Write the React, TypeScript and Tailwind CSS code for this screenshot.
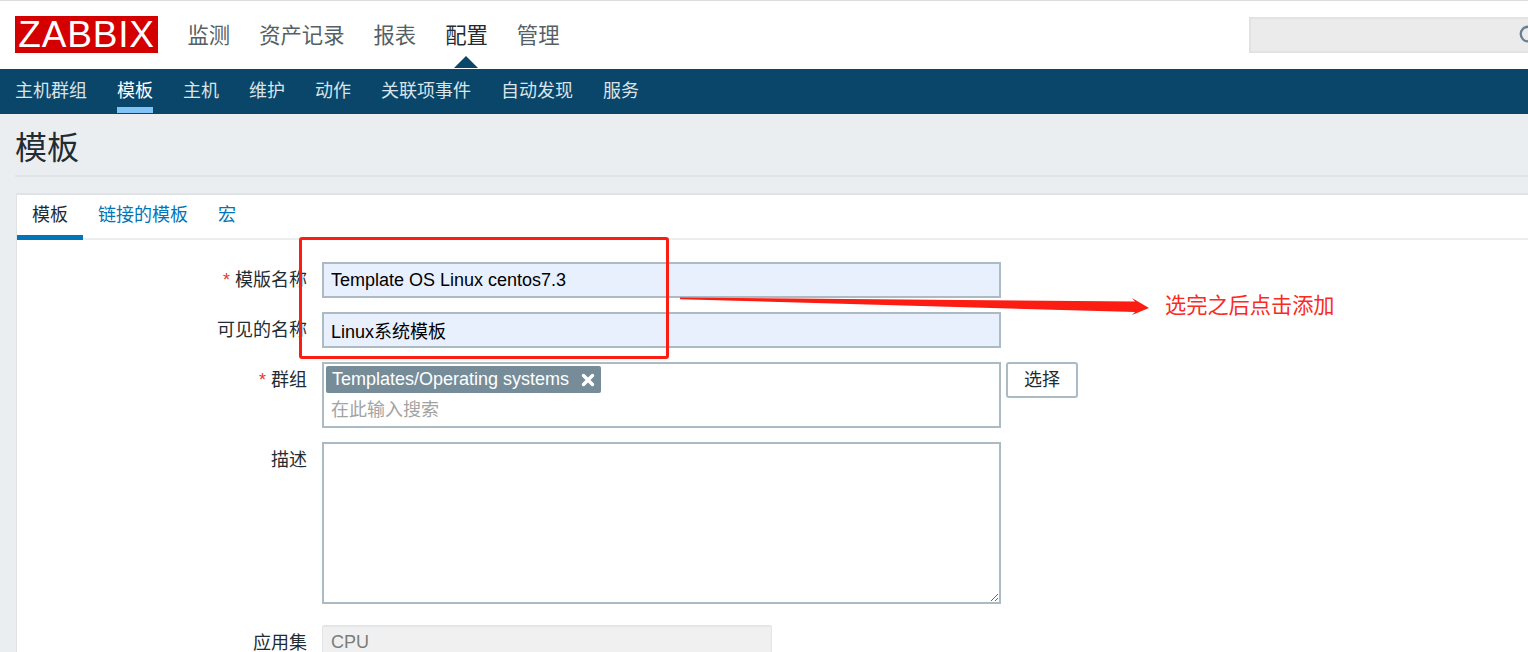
import { Search, X } from "lucide-react";

const FONT = `font-['Liberation_Sans','Noto_Sans_CJK_SC',sans-serif]`;

const topMenu = ["监测", "资产记录", "报表", "配置", "管理"];
const subMenu = ["主机群组", "模板", "主机", "维护", "动作", "关联项事件", "自动发现", "服务"];

function Label({ text, required }: { text: string; required?: boolean }) {
  return (
    <div className="w-[290px] shrink-0 text-right text-[18px] leading-[36px] text-[#1f2c33]">
      {required && <span className="mr-[5px] text-[#e33734]">*</span>}
      {text}
    </div>
  );
}

function TextField({ value }: { value: string }) {
  return (
    <input
      readOnly
      value={value}
      className="h-[36px] w-[679px] border-2 border-[#acbbc3] bg-[#e8f0fe] px-[7px] text-[18px] text-black outline-none"
    />
  );
}

export default function App() {
  return (
    <div className={`${FONT} relative h-[652px] w-[1528px] overflow-hidden bg-[#ebeef1]`}>
      {/* Top header */}
      <header className="flex h-[69px] items-center border-t border-[#dcdcdc] bg-white pl-[15px]">
        <div className="-mt-[1px] flex h-[37px] w-[143px] items-center justify-center bg-[#d40000] text-[37px] leading-none tracking-[0.8px] text-white">
          ZABBIX
        </div>
        <nav className="ml-[29.5px] flex gap-[29px] pt-[4px] text-[21.33px] text-[#555f66]">
          {topMenu.map((item) => (
            <a key={item} className={item === "配置" ? "relative text-[#1f2c33]" : ""}>
              {item}
              {item === "配置" && (
                <span className="absolute left-[9px] top-[35px] h-0 w-0 border-x-[12px] border-b-[12px] border-x-transparent border-b-[#0a466a]" />
              )}
            </a>
          ))}
        </nav>
        <div className="relative ml-auto h-[36px] w-[279px] border-2 border-r-0 border-[#e2e2e2] bg-[#ebebeb]">
          <Search className="absolute left-[267px] top-[5px] h-[22px] w-[22px] text-[#6a8091]" strokeWidth={2.5} />
        </div>
      </header>

      {/* Sub navigation */}
      <nav className="flex h-[45px] gap-[30px] bg-[#0a466a] pl-[15px] text-[18px] text-[#d9e4ea]">
        {subMenu.map((item) => (
          <a
            key={item}
            className={`h-[44px] leading-[44px] ${
              item === "模板" ? "border-b-[6px] border-[#7fc4f4] text-white" : ""
            }`}
          >
            {item}
          </a>
        ))}
      </nav>

      <main className="pl-[16px]">
        <div className="-ml-[1px] mb-[16px] h-[63px] border-b-2 border-[#e0e4e7]">
          <h1 className="text-[32px] leading-[68px] text-[#1f2c33]">模板</h1>
        </div>

        {/* Form card */}
        <section className="border-l border-t-2 border-[#dfe3e6] bg-white">
          <div className="flex h-[45px] border-b-2 border-[#ebeef1] text-[18px]">
            <a className="h-[45px] w-[66px] border-b-[5px] border-[#0275b8] text-center leading-[41px] text-[#1f2c33]">
              模板
            </a>
            <a className="ml-[15px] leading-[41px] text-[#0275b8]">链接的模板</a>
            <a className="ml-[30px] leading-[41px] text-[#0275b8]">宏</a>
          </div>

          <div className="flex flex-col pt-[22px]">
            <div className="flex gap-[15px]">
              <Label text="模版名称" required />
              <TextField value="Template OS Linux centos7.3" />
            </div>

            <div className="mt-[14px] flex gap-[15px]">
              <Label text="可见的名称" />
              <TextField value="Linux系统模板" />
            </div>

            <div className="mt-[14px] flex gap-[15px]">
              <Label text="群组" required />
              <div className="h-[66px] w-[679px] border-2 border-[#acbbc3] pl-[2px] pt-[2px]">
                <div className="flex h-[27px] w-[275px] items-center rounded-[2px] bg-[#768d99] pl-[6px] text-[18px] text-white">
                  Templates/Operating systems
                  <X className="ml-[10px] h-[18px] w-[18px]" strokeWidth={4.5} />
                </div>
                <div className="pl-[5px] pt-[4px] text-[18px] leading-[27px] text-[#a3a3a3]">在此输入搜索</div>
              </div>
              <button className="-ml-[10px] h-[36px] w-[72px] rounded-[3px] border-2 border-[#acbbc3] bg-white text-[18px] text-[#1f2c33]">
                选择
              </button>
            </div>

            <div className="mt-[14px] flex gap-[15px]">
              <Label text="描述" />
              <textarea
                readOnly
                className="h-[162px] w-[679px] border-2 border-[#acbbc3] bg-white outline-none"
              />
            </div>

            <div className="mt-[21px] flex gap-[15px]">
              <Label text="应用集" />
              <div className="h-[36px] w-[450px] rounded-[2px] border border-t-2 border-[#e3e6e8] bg-[#f0f0f0] px-[8px] text-[18px] leading-[30px] text-[#7c7c7c]">
                CPU
              </div>
            </div>
          </div>
        </section>
      </main>

      {/* Red annotations over the form */}
      <div className="absolute left-[299px] top-[237px] h-[122px] w-[370px] rounded-[3px] border-[3px] border-[#fb1c12]" />
      <svg className="absolute left-[678px] top-[294px]" width="475" height="24" viewBox="0 0 475 24">
        <path d="M2 3.4 L457 7.5 L454 4 L471 14 L454 21 L457 18 L2 5.2 Z" fill="#fb1c12" />
      </svg>
      <div className="absolute left-[1165px] top-[292px] text-[21.2px] leading-[28px] text-[#fb2a1e]">选完之后点击添加</div>
    </div>
  );
}
